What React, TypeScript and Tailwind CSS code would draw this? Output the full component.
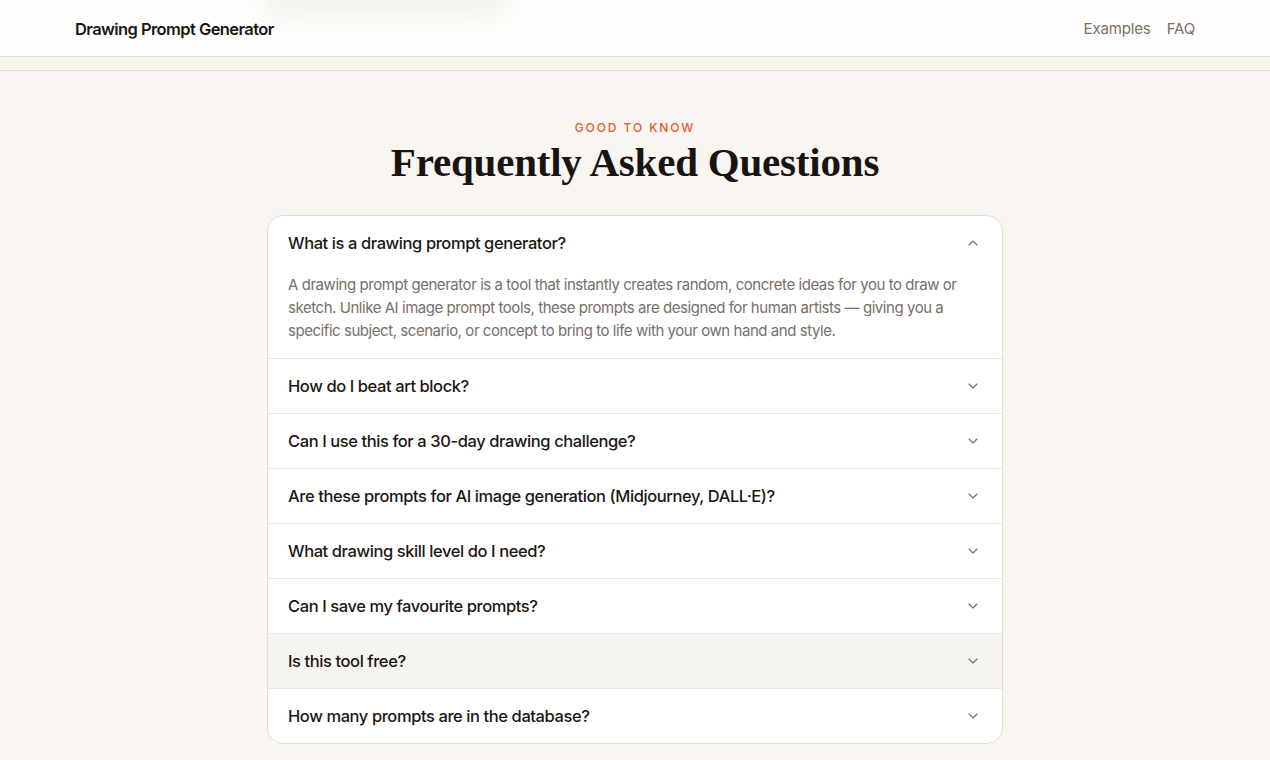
import React, { useState } from 'react';
import { ChevronDown, ChevronUp } from 'lucide-react';

const faqs = [
  {
    q: 'What is a drawing prompt generator?',
    a: 'A drawing prompt generator is a tool that instantly creates random, concrete ideas for you to draw or sketch. Unlike AI image prompt tools, these prompts are designed for human artists — giving you a specific subject, scenario, or concept to bring to life with your own hand and style.',
  },
  { q: 'How do I beat art block?', a: '' },
  { q: 'Can I use this for a 30-day drawing challenge?', a: '' },
  { q: 'Are these prompts for AI image generation (Midjourney, DALL·E)?', a: '' },
  { q: 'What drawing skill level do I need?', a: '' },
  { q: 'Can I save my favourite prompts?', a: '' },
  { q: 'Is this tool free?', a: '' },
  { q: 'How many prompts are in the database?', a: '' },
];

export default function App() {
  const [open, setOpen] = useState(0);

  return (
    <div className="min-h-screen bg-[#f9f6f1] font-['Inter',sans-serif] text-[#1c1714]">
      {/* Header */}
      <header className="relative h-[57px] overflow-hidden border-b border-[#e9e0d4] bg-[#fffefc]">
        <div className="pointer-events-none absolute left-[262px] top-[-14px] h-[30px] w-[246px] rounded-full bg-[#ece9e4] opacity-60 blur-md" />
        <div className="relative mx-auto flex h-full max-w-[1120px] items-center justify-between pt-[2px]">
          <span className="text-[16.5px] font-semibold tracking-[-0.035em]">Drawing Prompt Generator</span>
          <nav className="flex items-center gap-4 text-[15px] tracking-[-0.01em] text-[#7a6e66]">
            <a>Examples</a>
            <a>FAQ</a>
          </nav>
        </div>
      </header>
      <div className="h-[13px]" />

      {/* FAQ */}
      <section className="border-t border-[#e9e0d4] pb-10 pt-[48px]">
        <div className="flex flex-col items-center">
          <p className="text-[12px] font-medium tracking-[0.16em] text-[#e05a2f]">GOOD TO KNOW</p>
          <h2 className="mt-[-1px] font-['Liberation_Serif',serif] text-[41px] font-bold leading-[52px] tracking-[-0.005em] text-[#1a1411]">
            Frequently Asked Questions
          </h2>
        </div>

        <div className="mx-auto mt-[27px] w-[736px] overflow-hidden rounded-2xl border border-[#e6ddd0] bg-white">
          {faqs.map((f, i) => (
            <div key={f.q} className={i > 0 ? 'border-t border-[#eee8df]' : ''}>
              <button
                onClick={() => setOpen(open === i ? -1 : i)}
                className={`flex h-[54px] w-full items-center justify-between pl-5 pr-[21px] text-left ${
                  i === 6 ? 'bg-[#f7f5f0]' : ''
                }`}
              >
                <span className="text-[16.5px] font-medium tracking-[-0.025em]">{f.q}</span>
                {open === i ? (
                  <ChevronUp className="h-4 w-4 text-[#7a6e66]" strokeWidth={1.75} />
                ) : (
                  <ChevronDown className="h-4 w-4 text-[#7a6e66]" strokeWidth={1.75} />
                )}
              </button>
              {open === i && f.a && (
                <p className="pb-4 pl-5 pr-5 pt-[3px] text-[15px] leading-[23px] tracking-[-0.03em] text-[#7a6e66]">
                  {f.a}
                </p>
              )}
            </div>
          ))}
        </div>
      </section>
    </div>
  );
}
